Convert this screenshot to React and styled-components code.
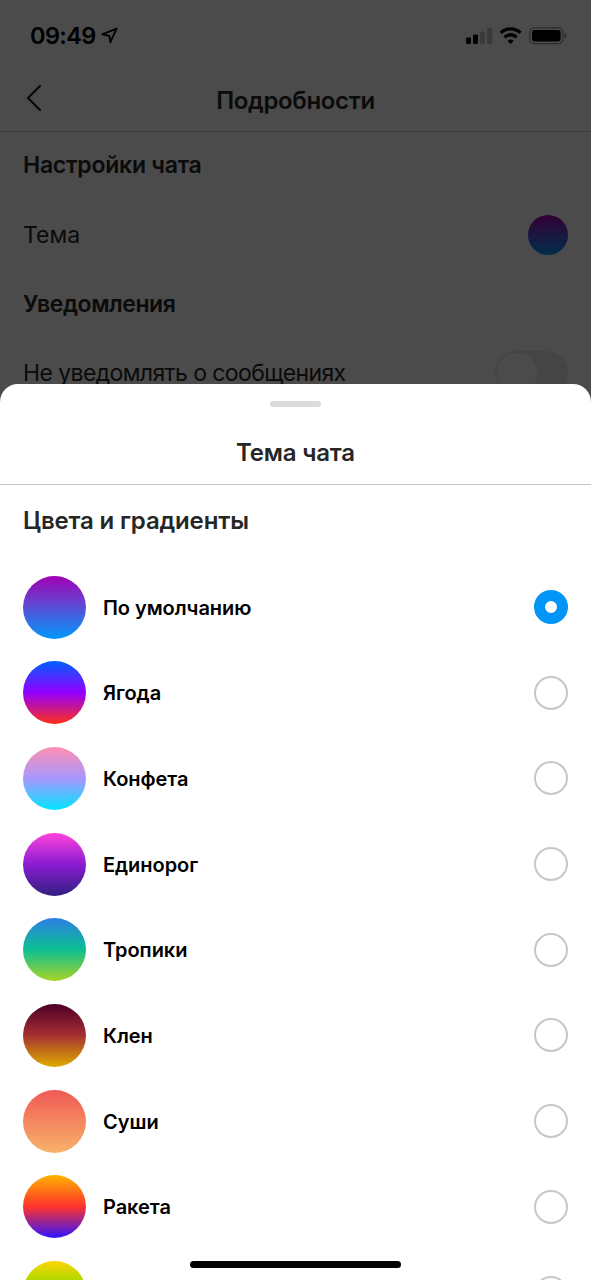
import React from 'react';
import styled, { createGlobalStyle, css } from 'styled-components';

const GlobalStyle = createGlobalStyle`
	* {
		box-sizing: border-box;
	}
	body {
		margin: 0;
		background: #fff;
		font-family: Inter, 'Liberation Sans', sans-serif;
	}
`;

const Screen = styled.div`
	position: relative;
	width: 591px;
	height: 1280px;
	overflow: hidden;
	background: #fafafa;
`;

const StatusBar = styled.header`
	display: flex;
	align-items: center;
	height: 71px;
	padding: 0 24px 0 30px;

	.time {
		flex: 1;
		display: flex;
		align-items: center;
		gap: 5px;
		font-size: 23.5px;
		font-weight: 600;
		letter-spacing: -0.6px;
		color: #000;
	}
	svg {
		display: block;
	}
`;

const NavBar = styled.nav`
	display: grid;
	grid-template-columns: 60px 1fr 60px;
	align-items: center;
	height: 61px;
	border-bottom: 1px solid #c4c4c4;

	svg {
		display: block;
		margin: -6px 0 0 25px;
	}
`;

const Title = styled.h1`
	margin: 0;
	font-size: 24px;
	line-height: 30px;
	font-weight: 600;
	letter-spacing: ${(p) => p.$spacing || 0}px;
	color: #262626;
	text-align: center;
`;

const SectionTitle = styled.h2`
	display: flex;
	align-items: center;
	height: ${(p) => p.$height}px;
	margin: 0;
	padding-left: 23px;
	font-size: ${(p) => p.$size || 23}px;
	font-weight: 600;
	letter-spacing: ${(p) => p.$spacing || 0}px;
	color: #262626;
`;

const SettingRow = styled.div`
	display: flex;
	align-items: center;
	justify-content: space-between;
	height: ${(p) => p.$height}px;
	padding: 0 23px;
	font-size: 23px;
	letter-spacing: ${(p) => p.$spacing || 0}px;
	color: #262626;
`;

const Swatch = styled.div`
	flex: none;
	width: ${(p) => p.$size}px;
	height: ${(p) => p.$size}px;
	border-radius: 50%;
	background: linear-gradient(${(p) => p.$colors.join(', ')});
`;

const Toggle = styled.div`
	width: 73px;
	height: 44px;
	padding: 2px;
	border-radius: 22px;
	background: #e6e6e6;

	&::before {
		content: '';
		display: block;
		width: 40px;
		height: 40px;
		border-radius: 50%;
		background: #fafafa;
	}
`;

const Backdrop = styled.div`
	position: absolute;
	inset: 0;
	background: rgba(0, 0, 0, 0.7);
`;

const Sheet = styled.section`
	position: absolute;
	top: 384px;
	left: 0;
	right: 0;
	bottom: 0;
	overflow: hidden;
	border-radius: 18px 18px 0 0;
	background: #fff;
`;

const SheetHeader = styled.div`
	height: 101px;
	padding-top: 17px;
	border-bottom: 1px solid #c4c4c4;
`;

const Grabber = styled.div`
	width: 51px;
	height: 6px;
	margin: 0 auto 31px;
	border-radius: 3px;
	background: #dbdbdb;
`;

const ThemeList = styled.ul`
	margin: 0;
	padding: 9.2px 0 0;
	list-style: none;
`;

const ThemeRow = styled.li`
	display: flex;
	align-items: center;
	height: 85.7px;
	padding: 0 23px;

	.name {
		flex: 1;
		padding: 1px 0 0 17px;
		font-size: 20px;
		font-weight: 600;
		letter-spacing: -0.05px;
		color: #000;
	}
`;

const Radio = styled.div`
	width: 34px;
	height: 34px;
	border: 2px solid #c7c7c7;
	border-radius: 50%;

	${(p) =>
		p.$checked &&
		css`
			border: 11px solid #0095f6;
		`}
`;

const HomeIndicator = styled.div`
	position: absolute;
	left: 190px;
	bottom: 12px;
	width: 211px;
	height: 7px;
	border-radius: 4px;
	background: #000;
`;

const defaultColors = ['#a000b4', '#6a3fd0 40%', '#0099fa'];

const themes = [
	{ name: 'По умолчанию', colors: defaultColors },
	{ name: 'Ягода', colors: ['#005fff', '#9200ff 50%', '#ff2e19'] },
	{ name: 'Конфета', colors: ['#ff8fb2', '#a797ff 50%', '#00e5ff'] },
	{ name: 'Единорог', colors: ['#ff43dc', '#8a1bd2 50%', '#312080'] },
	{ name: 'Тропики', colors: ['#2c7fe5', '#0cbf92 50%', '#a8d526'] },
	{ name: 'Клен', colors: ['#4c0026', '#a12b32 47%', '#e0ab00'] },
	{ name: 'Суши', colors: ['#f05956', '#f8b36a'] },
	{ name: 'Ракета', colors: ['#ffb300', '#ff332c 50%', '#3114ff'] },
	{ name: '', colors: ['#ffd400', '#97db00 40%', '#10a86b'] },
];

const LocationIcon = () => (
	<svg width="17" height="17" viewBox="0 0 17 17">
		<path
			d="M1.2 7.4 15.6 1.7 9.4 15.2 8.3 8.9Z"
			fill="none"
			stroke="#000"
			strokeWidth="1.8"
			strokeLinejoin="round"
		/>
	</svg>
);

const StatusIcons = () => (
	<svg width="101" height="18" viewBox="0 0 101 18">
		<rect x="0" y="10.5" width="5" height="6.5" rx="1.2" />
		<rect x="7" y="7.5" width="5" height="9.5" rx="1.2" />
		<g fill="#c2c2c2">
			<rect x="14" y="4.5" width="5" height="12.5" rx="1.2" />
			<rect x="21.2" y="0.8" width="5" height="16.2" rx="1.2" />
		</g>
		<g fill="none" stroke="#000" strokeWidth="3.3">
			<path d="M34.7 5.9a14.1 14.1 0 0 1 19.8 0" />
			<path d="M38.6 10.2a8.6 8.6 0 0 1 12 0" />
		</g>
		<path d="M44.6 17 41.5 13.8a4.6 4.6 0 0 1 6.2 0Z" />
		<rect
			x="63.8"
			y="0.8"
			width="33"
			height="15.8"
			rx="4.4"
			fill="none"
			stroke="#939393"
			strokeWidth="1.2"
		/>
		<rect x="66" y="2.9" width="28.6" height="11.6" rx="2.4" />
		<path d="M98.6 6c2.2.8 2.2 4.6 0 5.4Z" fill="#777" />
	</svg>
);

const BackIcon = () => (
	<svg width="18" height="28" viewBox="0 0 18 28">
		<path
			d="M15 2 3 14 15 26"
			fill="none"
			stroke="#1a1a1a"
			strokeWidth="2.2"
			strokeLinecap="round"
			strokeLinejoin="round"
		/>
	</svg>
);

const App = () => {
	const [selected, setSelected] = React.useState(0);

	return (
		<Screen>
			<GlobalStyle />
			<StatusBar>
				<div className="time">
					09:49
					<LocationIcon />
				</div>
				<StatusIcons />
			</StatusBar>
			<NavBar>
				<BackIcon />
				<Title $spacing={-0.35}>Подробности</Title>
			</NavBar>
			<SectionTitle $height={66} $spacing={-0.25}>
				Настройки чата
			</SectionTitle>
			<SettingRow $height={74}>
				Тема
				<Swatch $size={40} $colors={defaultColors} />
			</SettingRow>
			<SectionTitle $height={64} $spacing={-0.45}>
				Уведомления
			</SectionTitle>
			<SettingRow $height={73} $spacing={-0.6}>
				Не уведомлять о сообщениях
				<Toggle />
			</SettingRow>

			<Backdrop />
			<Sheet>
				<SheetHeader>
					<Grabber />
					<Title $spacing={-0.2}>Тема чата</Title>
				</SheetHeader>
				<SectionTitle $height={70} $size={24} $spacing={-0.15}>
					Цвета и градиенты
				</SectionTitle>
				<ThemeList>
					{themes.map((theme, i) => (
						<ThemeRow key={i} onClick={() => setSelected(i)}>
							<Swatch $size={63} $colors={theme.colors} />
							<span className="name">{theme.name}</span>
							<Radio $checked={i === selected} />
						</ThemeRow>
					))}
				</ThemeList>
			</Sheet>
			<HomeIndicator />
		</Screen>
	);
};

export default App;
